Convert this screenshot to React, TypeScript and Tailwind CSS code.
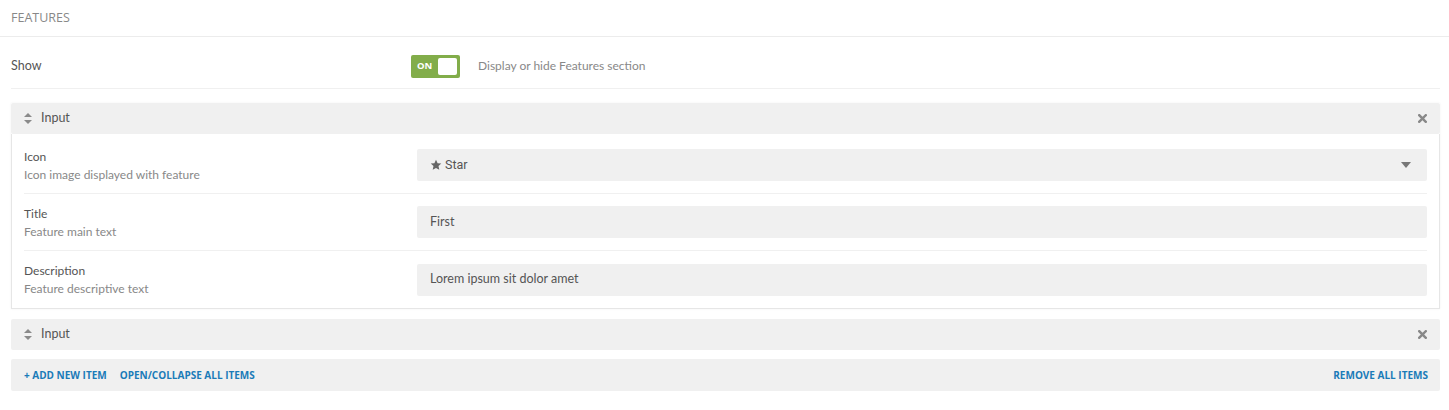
const fields = [
  { label: "Icon", help: "Icon image displayed with feature", value: "Star", select: true },
  { label: "Title", help: "Feature main text", value: "First" },
  { label: "Description", help: "Feature descriptive text", value: "Lorem ipsum sit dolor amet" },
]

function SortIcon() {
  return (
    <svg width="8" height="11" viewBox="0 0 8 11" className="fill-[#8a8a8a]">
      <path d="M4 0 L8 4 H0 Z" />
      <path d="M0 7 H8 L4 11 Z" />
    </svg>
  )
}

function CloseIcon() {
  return (
    <svg width="9" height="9" viewBox="0 0 9 9" className="stroke-[#888]" strokeWidth="2.4" strokeLinecap="square">
      <path d="M1.2 1.2 L7.8 7.8 M7.8 1.2 L1.2 7.8" />
    </svg>
  )
}

function StarIcon() {
  return (
    <svg width="12" height="12" viewBox="0 0 24 24" className="fill-[#666]">
      <path d="M12 1.5l3.2 6.9 7.3.8-5.5 5 1.6 7.3L12 17.8l-6.6 3.7 1.6-7.3-5.5-5 7.3-.8z" />
    </svg>
  )
}

function ItemHeader() {
  return (
    <div className="flex h-[31px] items-center justify-between rounded-[2px] bg-[#f0f0f0] px-[13px]">
      <div className="flex items-center gap-[9px]">
        <SortIcon />
        <span className="text-[12.5px] text-[#555]">Input</span>
      </div>
      <CloseIcon />
    </div>
  )
}

export default function App() {
  return (
    <div className="min-h-[410px] bg-white font-['Lato',sans-serif] text-[12px] text-[#555]">
      <div className="flex h-[37px] items-center border-b border-[#ececec] pl-[11px]">
        <span className="font-['Open_Sans',sans-serif] text-[12.5px] uppercase text-[#888]">Features</span>
      </div>

      <div className="ml-[11px] mr-[9px]">
        <div className="flex h-[52px] items-center border-b border-[#f0f0f0] pt-[7px]">
          <span className="w-[400px] text-[12.5px] text-[#555]">Show</span>
          <div className="flex h-[23px] w-[49px] items-center justify-between rounded-[2px] bg-[#82ad4a] pl-[6px] pr-[3px]">
            <span className="font-['Open_Sans',sans-serif] text-[9.5px] font-bold text-white">ON</span>
            <span className="h-[17px] w-[19px] rounded-[2px] bg-white" />
          </div>
          <span className="ml-[18px] text-[12px] text-[#888]">Display or hide Features section</span>
        </div>

        <div className="mt-[14px] shadow-[0_0_2px_rgba(0,0,0,0.06)]">
          <ItemHeader />
          <div className="border border-t-0 border-[#e6e6e6] px-[12px] pt-[3px]">
            {fields.map((f, i) => (
              <div
                key={f.label}
                className={`flex h-[57px] items-center ${i < fields.length - 1 ? "border-b border-[#f0f0f0]" : ""}`}
              >
                <div className="w-[393px]">
                  <div className="text-[12px] leading-[18px] text-[#555]">{f.label}</div>
                  <div className="text-[12px] leading-[17px] text-[#888]">{f.help}</div>
                </div>
                <div className="flex h-[32px] flex-1 items-center justify-between rounded-[2px] bg-[#f0f0f0] pl-[13px] pr-[16px]">
                  <div className="flex items-center gap-[3px] text-[12.5px] text-[#555]">
                    {f.select && <StarIcon />}
                    <span className={f.select ? "font-['Roboto',sans-serif] text-[12.5px]" : ""}>{f.value}</span>
                  </div>
                  {f.select && (
                    <svg width="10" height="6" viewBox="0 0 10 6" className="fill-[#777]">
                      <path d="M0 0 H10 L5 6 Z" />
                    </svg>
                  )}
                </div>
              </div>
            ))}
          </div>
        </div>

        <div className="mt-[10px]">
          <ItemHeader />
        </div>

        <div className="mt-[9px] flex h-[32px] items-center justify-between rounded-[2px] bg-[#f0f0f0] pl-[13px] pr-[12px] font-['Open_Sans',sans-serif] text-[10px] font-bold uppercase text-[#1a7bb8]">
          <div className="flex items-center gap-[13px]">
            <span>+ Add new item</span>
            <span>Open/collapse all items</span>
          </div>
          <span>Remove all items</span>
        </div>
      </div>
    </div>
  )
}
